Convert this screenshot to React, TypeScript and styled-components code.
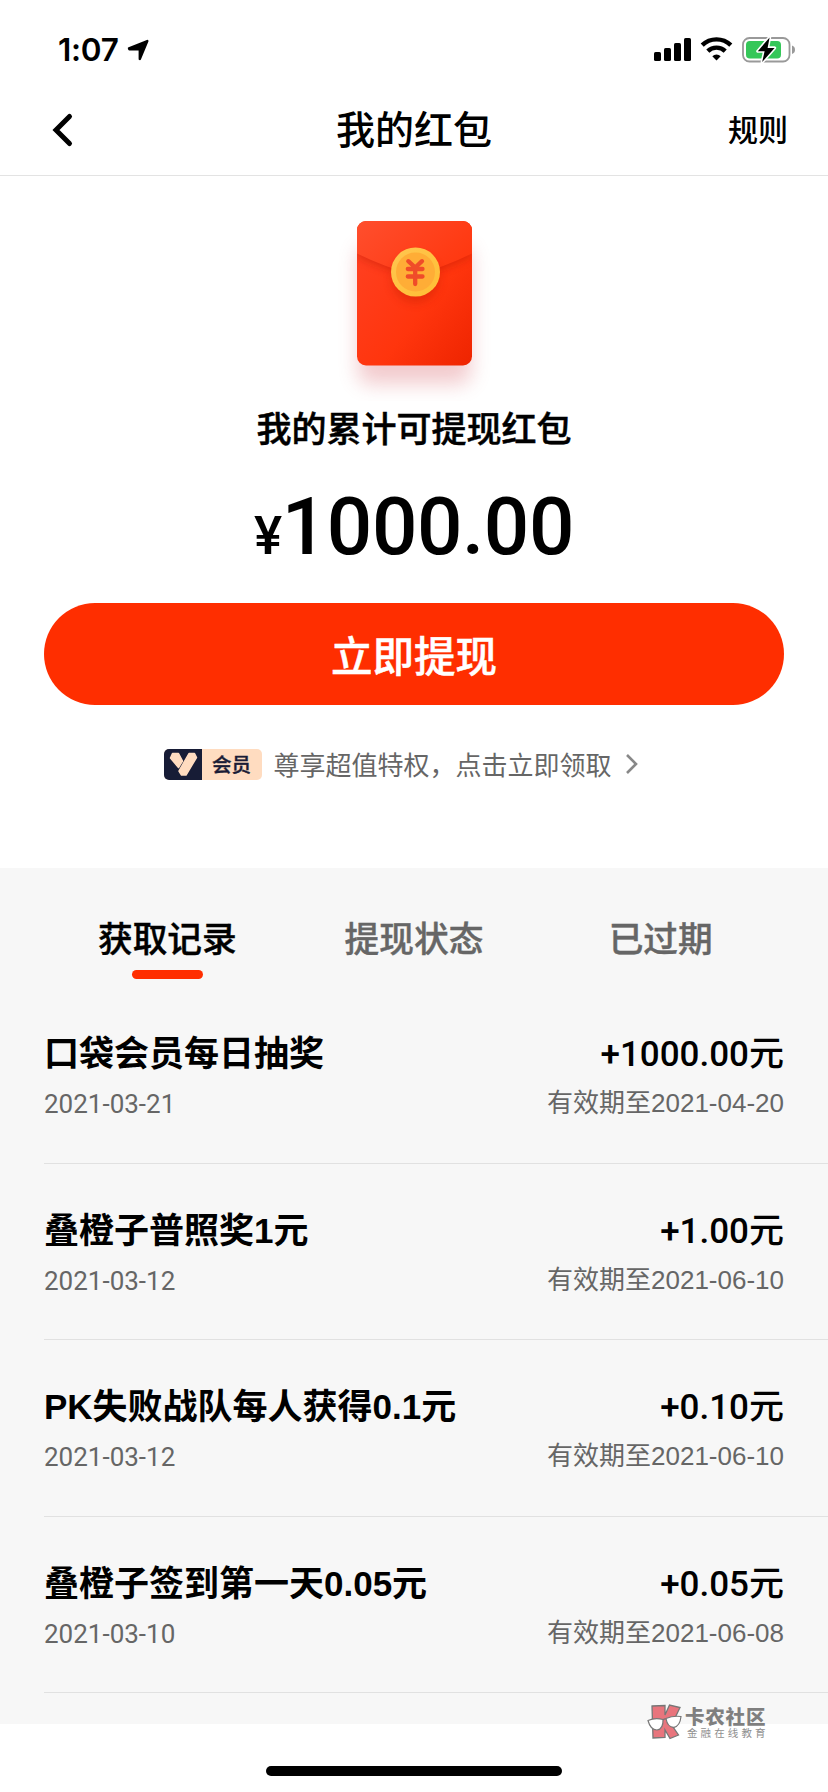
import React from "react";
import styled, { createGlobalStyle } from "styled-components";

const GlobalStyle = createGlobalStyle`
  * { box-sizing: border-box; }
  body { margin: 0; background: #fff; }
`;

const cjk = `"Noto Sans CJK SC", sans-serif`;
const arial = `"Liberation Sans", ${cjk}`;
const roboto = `Roboto, ${cjk}`;

const Screen = styled.div`
  width: 828px;
  height: 1792px;
  display: flex;
  flex-direction: column;
  background: #fff;
  color: #000;
  font-family: ${arial};
  overflow: hidden;
  white-space: nowrap;
`;

const StatusBar = styled.header`
  height: 88px;
  padding: 12px 32px 0 58px;
  display: flex;
  align-items: center;
  justify-content: space-between;
`;

const Clock = styled.div`
  display: flex;
  align-items: center;
  gap: 8px;
  font: 600 31.5px/40px Inter, sans-serif;
  letter-spacing: -0.3px;
`;

const StatusIcons = styled.div`
  display: flex;
  align-items: center;
`;

const NavBar = styled.nav`
  height: 88px;
  padding: 0 40px 4px 52px;
  display: grid;
  grid-template-columns: 1fr auto 1fr;
  align-items: center;
  border-bottom: 1px solid #e3e3e3;
`;

const Title = styled.h1`
  margin: 0;
  padding: 0 12px 5px 0;
  font: 500 39px/56px ${cjk};
`;

const Rules = styled.span`
  justify-self: end;
  padding-bottom: 4px;
  font: 500 30px/44px ${cjk};
`;

const Summary = styled.section`
  height: 692px;
  display: flex;
  flex-direction: column;
  align-items: center;
`;

const Envelope = styled.svg`
  display: block;
  margin-top: 15px;
`;

const Caption = styled.div`
  font: 500 35px/52px ${cjk};
  -webkit-text-stroke: 0.5px currentColor;
`;

const Amount = styled.div`
  margin-top: 26px;
  font: 500 80px/96px ${roboto};
  letter-spacing: -0.4px;
  display: flex;
  align-items: baseline;
  small { font-size: 53px; }
`;

const Withdraw = styled.button`
  width: 740px;
  height: 102px;
  margin: 19px 0 0;
  padding: 0;
  border: 0;
  border-radius: 51px;
  background: #ff2e00;
  color: #fff;
  font: 500 41.5px/60px ${cjk};
  -webkit-text-stroke: 0.5px currentColor;
`;

const Member = styled.div`
  display: flex;
  align-items: center;
  width: 501px;
  margin-top: 39px;
  height: 40px;
  color: #666;
  font: 400 26px/40px ${cjk};
`;

const Badge = styled.span`
  width: 98px;
  height: 31px;
  margin-right: 12px;
  display: flex;
  border-radius: 5px;
  overflow: hidden;
  background: #ffdcc0;
  color: #1a1c36;
`;

const BadgeLabel = styled.span`
  flex: 1;
  text-align: center;
  font: 500 19.5px/29px ${cjk};
  -webkit-text-stroke: 0.4px currentColor;
`;

const Arrow = styled.svg`
  margin-left: 13px;
`;

const Records = styled.section`
  height: 856px;
  background: #f7f7f7;
`;

const Tabs = styled.div`
  height: 119px;
  padding: 43px 44px 0;
  display: grid;
  grid-template-columns: repeat(3, 1fr);
`;

const Tab = styled.div<{ $active?: boolean }>`
  display: flex;
  flex-direction: column;
  align-items: center;
  gap: 7px;
  color: ${(p) => (p.$active ? "#000" : "#666")};
  font: 500 34.7px/52px ${cjk};
  -webkit-text-stroke: 0.4px currentColor;
  &::after {
    content: "";
    width: 71px;
    height: 9px;
    border-radius: 4.5px;
    background: ${(p) => (p.$active ? "#ff2e00" : "transparent")};
  }
`;

const Row = styled.article`
  height: 176.6px;
  margin-left: 44px;
  padding: 41px 44px 0 0;
  display: grid;
  grid-template-columns: 1fr auto;
  grid-template-rows: 52px 40px;
  row-gap: 3px;
  border-bottom: 1px solid #e1e1e1;
`;

const Name = styled.div`
  font: 700 35px/52px ${arial};
`;

const Gain = styled.div`
  font: 500 35px/54px ${roboto};
  text-align: right;
`;

const Received = styled.div`
  color: #666;
  font: 400 26px/42px ${roboto};
`;

const Expiry = styled.div`
  color: #666;
  text-align: right;
  font: 400 26px/40px ${arial};
`;

const Footer = styled.footer`
  flex: 1;
  position: relative;
  display: flex;
  justify-content: center;
  align-items: flex-end;
  padding-bottom: 16px;
`;

const HomeIndicator = styled.div`
  width: 296px;
  height: 10px;
  border-radius: 5px;
  background: #000;
`;

const Watermark = styled.div`
  position: absolute;
  right: 60px;
  top: -20px;
  display: flex;
  gap: 3px;
`;

const Brand = styled.div`
  color: #7f7f7f;
  width: 83px;
  strong {
    display: block;
    font: 900 19.5px/23px ${cjk};
    letter-spacing: 0.8px;
  }
  span {
    display: block;
    margin-left: 2px;
    color: #8f8f8f;
    font: 400 10.5px/12px ${cjk};
    letter-spacing: 3.1px;
  }
`;

const records = [
  { name: "口袋会员每日抽奖", gain: "+1000.00元", date: "2021-03-21", until: "2021-04-20" },
  { name: "叠橙子普照奖1元", gain: "+1.00元", date: "2021-03-12", until: "2021-06-10" },
  { name: "PK失败战队每人获得0.1元", gain: "+0.10元", date: "2021-03-12", until: "2021-06-10" },
  { name: "叠橙子签到第一天0.05元", gain: "+0.05元", date: "2021-03-10", until: "2021-06-08" },
];

const LocationIcon = () => (
  <svg width="24" height="22" viewBox="0 0 24 22">
    <path d="M3 9.300 21.300 2 13.800 20V10.400H3.400Z" stroke="#000" strokeWidth="2.400" strokeLinejoin="round" />
  </svg>
);

const PhoneStatus = () => (
  <svg width="142" height="26" viewBox="0 0 142 26">
    <rect x="0" y="15" width="7" height="9" rx="1.6" />
    <rect x="10" y="11" width="7" height="13" rx="1.6" />
    <rect x="20" y="6" width="7" height="18" rx="1.6" />
    <rect x="30" y="1" width="7" height="23" rx="1.6" />
    <g fill="none" stroke="#000" strokeWidth="4.4">
      <path d="M48.2 8.2A20.5 20.5 0 0 1 76.8 8.2" />
      <path d="M53.8 14.1A12.5 12.5 0 0 1 71.2 14.1" />
    </g>
    <path d="M58.3 19.2A6.2 6.2 0 0 1 66.7 19.2L62.5 23.6Z" />
    <rect x="89" y="1" width="46.5" height="23.5" rx="6.5" fill="none" stroke="#999" strokeWidth="1.8" />
    <rect x="92" y="4" width="35" height="17.5" rx="3.8" fill="#35c759" />
    <path d="M138 8.5Q141 9.5 141 12.8T138 17Z" fill="#999" />
    <path d="M115.6 .4 103.8 14.2H110.6L108.2 25 120.6 10.9H113.6Z" stroke="#fff" strokeWidth="3.2" paintOrder="stroke" strokeLinejoin="round" />
  </svg>
);

const RedEnvelope = () => (
  <Envelope width="200" height="210" viewBox="314 191 200 210">
    <defs>
      <linearGradient id="body" x1="0" y1="0" x2="1" y2="1">
        <stop offset="0" stopColor="#ff4225" />
        <stop offset=".6" stopColor="#ff350d" />
        <stop offset="1" stopColor="#ee2400" />
      </linearGradient>
      <linearGradient id="flap" x1="0" y1="0" x2="1" y2=".5">
        <stop offset="0" stopColor="#ff5030" />
        <stop offset="1" stopColor="#ff3810" />
      </linearGradient>
      <linearGradient id="coin" x1="0" y1="0" x2="1" y2="1">
        <stop offset="0" stopColor="#ffc650" />
        <stop offset="1" stopColor="#ffbe34" />
      </linearGradient>
      <clipPath id="card"><rect x="357" y="221" width="115" height="144.5" rx="9" /></clipPath>
      <filter id="soft" x="-50%" y="-50%" width="200%" height="200%"><feGaussianBlur stdDeviation="10" /></filter>
      <filter id="near" x="-50%" y="-50%" width="200%" height="200%"><feGaussianBlur stdDeviation="4" /></filter>
    </defs>
    <rect x="358" y="246" width="113" height="138" rx="12" fill="#d0404a" opacity=".27" filter="url(#soft)" />
    <rect x="357" y="221" width="115" height="144.5" rx="9" fill="url(#body)" />
    <g clipPath="url(#card)">
      <path d="M357 256Q384 270 414.500 277Q445 270 472 256V221H357Z" fill="#b31500" opacity=".4" filter="url(#near)" />
      <path d="M350 250 357 253.500Q384 267 414.500 275Q445 267 472 253.500L480 250V215H350Z" fill="url(#flap)" />
      <circle cx="415.500" cy="279" r="24" fill="#c01c00" opacity=".35" filter="url(#near)" />
    </g>
    <circle cx="415.500" cy="272" r="24.500" fill="url(#coin)" />
    <circle cx="415.500" cy="272" r="19.500" fill="#ffad36" />
    <path d="M408.300 261.200 415.200 267.500 422 261.200M407.800 269H422.500M407.800 276.500H422.500M415.200 268V284" fill="none" stroke="#f04c29" strokeWidth="4.300" strokeLinecap="round" strokeLinejoin="round" />
  </Envelope>
);

const KLogo = () => (
  <svg width="35" height="36" viewBox="0 0 35 36">
    <path d="M5 2 18 1.500V11L22.500 1 33 3.500 27.500 15 24 20 31.500 31 23 34.500 18 26V33.500L6 34Z" fill="#e8757d" stroke="#777" strokeWidth="1.300" />
    <path d="M1 16.500Q8 13.500 16 15.500Q16.500 25 10 26Q3.500 26 1 16.500ZM19 14.500Q26 11.500 34 12.500Q33 22 27 23.300Q20.500 23.500 19 14.500Z" fill="#fff" stroke="#777" strokeWidth="1.200" />
    <path d="M16 16Q17.500 14.500 19 15" fill="none" stroke="#777" strokeWidth="1.200" />
  </svg>
);

export default function App() {
  return (
    <Screen>
      <GlobalStyle />
      <StatusBar>
        <Clock>1:07<LocationIcon /></Clock>
        <StatusIcons><PhoneStatus /></StatusIcons>
      </StatusBar>
      <NavBar>
        <svg width="22" height="36" viewBox="0 0 22 36">
          <path d="M17.500 4.500 4 18 17.500 31.500" fill="none" stroke="#000" strokeWidth="5" strokeLinecap="round" />
        </svg>
        <Title>我的红包</Title>
        <Rules>规则</Rules>
      </NavBar>
      <Summary>
        <RedEnvelope />
        <Caption>我的累计可提现红包</Caption>
        <Amount><small>¥</small>1000.00</Amount>
        <Withdraw>立即提现</Withdraw>
        <Member>
          <Badge>
            <svg width="38" height="31" viewBox="0 0 38 31">
              <rect width="38" height="31" fill="#171c36" />
              <path d="M8.500 4.500H14.500L18.500 12 14.500 18.500 6.500 9Z" fill="#ffdcc0" stroke="#ffdcc0" strokeWidth="1.500" strokeLinejoin="round" />
              <path d="M25 4.500H30.500L32.500 8.500 22 26H17.500L15 22Z" fill="#ffdcc0" stroke="#ffdcc0" strokeWidth="1.500" strokeLinejoin="round" />
            </svg>
            <BadgeLabel>会员</BadgeLabel>
          </Badge>
          尊享超值特权，点击立即领取
          <Arrow width="14" height="22" viewBox="0 0 14 22">
            <path d="M2 2 11 11 2 20" fill="none" stroke="#888" strokeWidth="2.600" />
          </Arrow>
        </Member>
      </Summary>
      <Records>
        <Tabs>
          <Tab $active>获取记录</Tab>
          <Tab>提现状态</Tab>
          <Tab>已过期</Tab>
        </Tabs>
        {records.map((r) => (
          <Row key={r.name}>
            <Name>{r.name}</Name>
            <Gain>{r.gain}</Gain>
            <Received>{r.date}</Received>
            <Expiry>有效期至{r.until}</Expiry>
          </Row>
        ))}
      </Records>
      <Footer>
        <Watermark>
          <KLogo />
          <Brand>
            <strong>卡农社区</strong>
            <span>金融在线教育</span>
          </Brand>
        </Watermark>
        <HomeIndicator />
      </Footer>
    </Screen>
  );
}
